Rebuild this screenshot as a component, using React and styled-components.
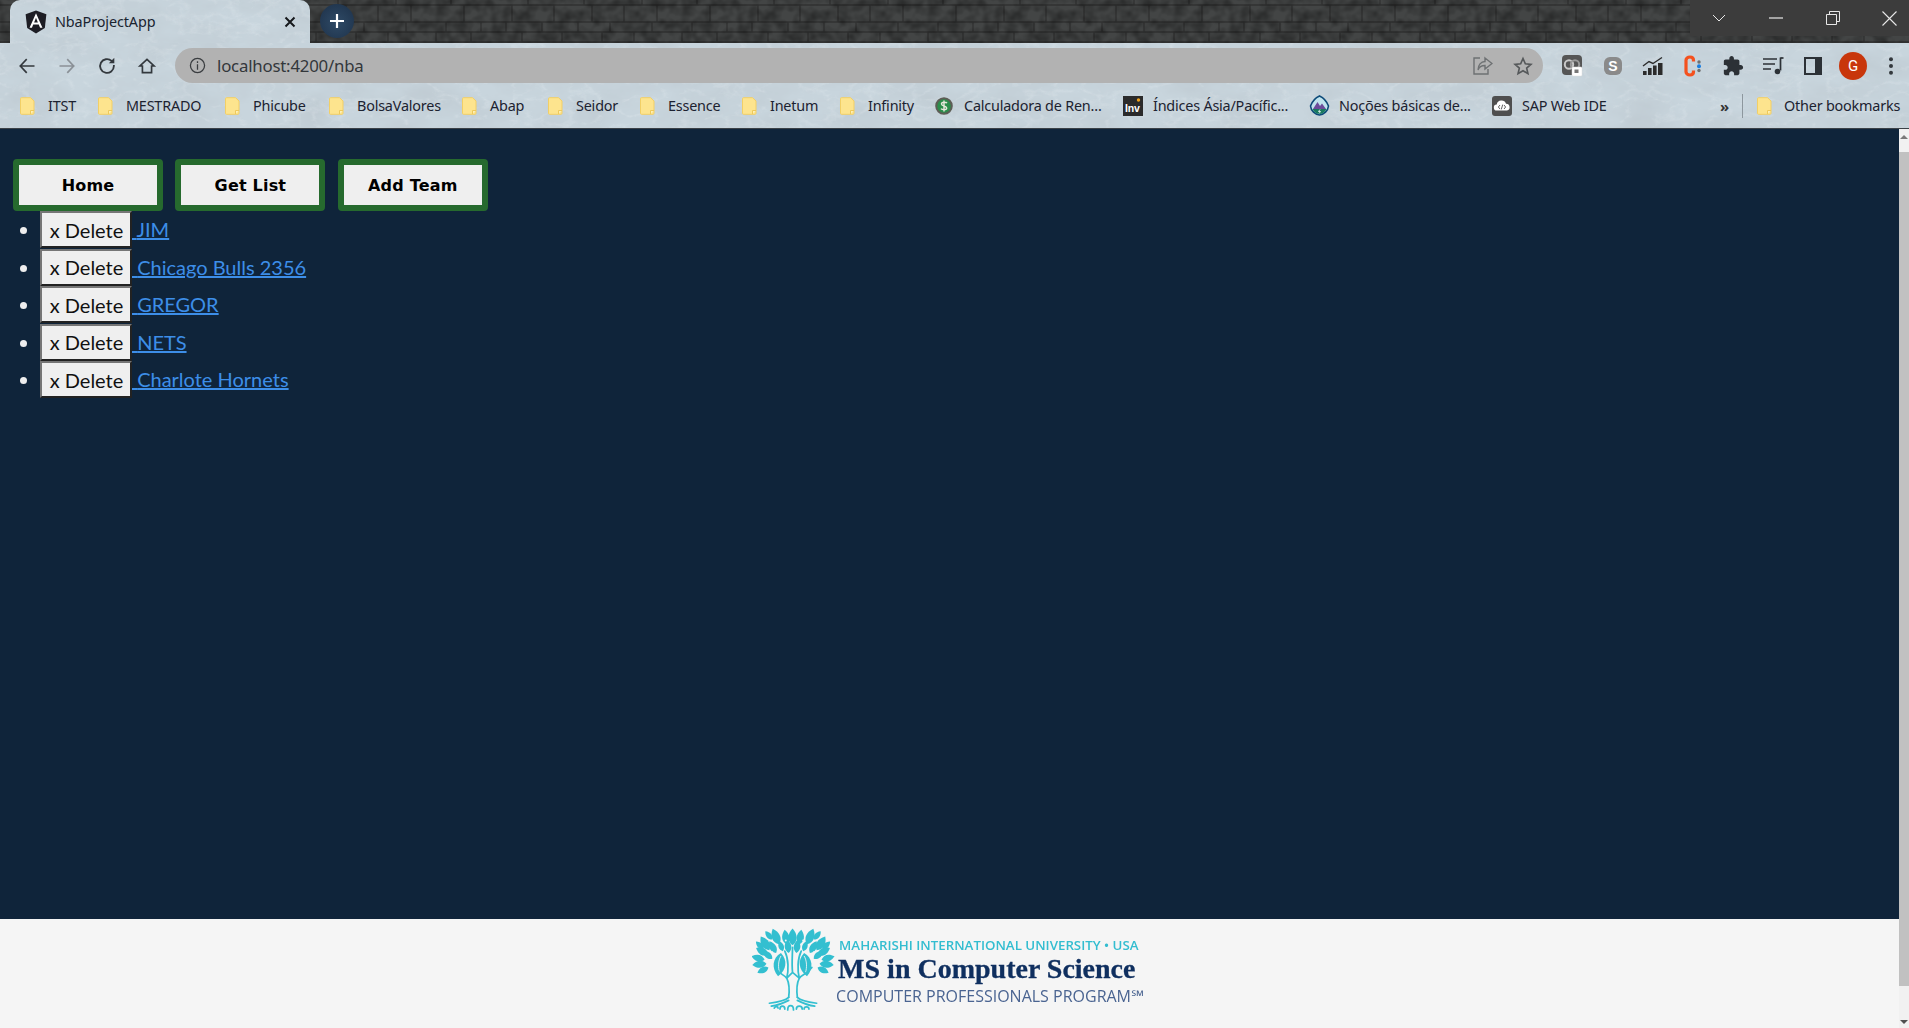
import React from "react";
import styled, { createGlobalStyle } from "styled-components";

const svgUrl = (s) => `url("data:image/svg+xml,${encodeURIComponent(s)}")`;

const marble = svgUrl(`<svg xmlns='http://www.w3.org/2000/svg' width='1909' height='130'>
<filter id='a' x='0' y='0' width='100%' height='100%'><feTurbulence type='fractalNoise' baseFrequency='0.018 0.035' numOctaves='5' seed='7'/>
<feColorMatrix values='0 0 0 0 0.52  0 0 0 0 0.59  0 0 0 0 0.64  1 1 0 0 -0.75'/></filter>
<filter id='b' x='0' y='0' width='100%' height='100%'><feTurbulence type='turbulence' baseFrequency='0.035 0.06' numOctaves='4' seed='11'/>
<feColorMatrix values='0 0 0 0 0.92  0 0 0 0 0.95  0 0 0 0 0.97  0 -2.2 0 0 0.55'/></filter>
<rect width='100%' height='100%' fill='#c8d5dd'/><rect width='100%' height='100%' filter='url(#a)'/><rect width='100%' height='100%' filter='url(#b)' opacity='.35'/></svg>`);

const stones = svgUrl(`<svg xmlns='http://www.w3.org/2000/svg' width='246' height='43'>
<filter id='n' x='0' y='0' width='100%' height='100%'><feTurbulence type='fractalNoise' baseFrequency='0.09' numOctaves='2' seed='3' stitchTiles='stitch'/>
<feColorMatrix values='0 0 0 0 0  0 0 0 0 0  0 0 0 0 0  0 .7 0 0 -0.22'/></filter>
<rect width='246' height='43' fill='#434545'/>
<g fill='none' stroke='#303131' stroke-width='1.3'>
<path d='M0 5H246M0 22H246M0 32H246M0 42H246'/>
<path d='M36 0V5M92 0V5M150 0V5M205 0V5M20 5V22M62 5V22M100 5V22M132 5V22M165 5V22M218 5V22M14 22V32M50 22V32M86 22V32M118 22V32M160 22V32M200 22V32M235 22V32M30 32V42M70 32V42M110 32V42M142 32V42M190 32V42M225 32V42'/></g>
<rect width='246' height='43' filter='url(#n)'/></svg>`);

const Global = createGlobalStyle`
  html, body { margin: 0; padding: 0; height: 100%; overflow: hidden; }
  body { font-family: "Lato", "Noto Sans", sans-serif; background: #0f243a; }
`;

const Shell = styled.div`
  height: 1028px;
  display: flex;
  flex-direction: column;
  overflow: hidden;
`;

const Chrome = styled.header`
  flex: none;
  height: 129px;
  display: flex;
  flex-direction: column;
  background: ${marble};
  border-bottom: 1px solid #3b4147;
  box-sizing: border-box;
  font-family: "Noto Sans", "Open Sans", sans-serif;
`;

const TabStrip = styled.div`
  height: 43px;
  flex: none;
  display: flex;
  background: ${stones};
  position: relative;
`;

const Tab = styled.div`
  margin-left: 10px;
  width: 300px;
  height: 43px;
  box-sizing: border-box;
  padding: 0 14px 0 15px;
  display: flex;
  align-items: center;
  gap: 8px;
  background: ${marble};
  border-radius: 10px 10px 0 0;
  font-size: 14.4px;
  color: #1a2430;
`;

const TabTitle = styled.span`
  flex: 1;
  letter-spacing: -0.1px;
`;

const NewTab = styled.div`
  margin: 4px 0 0 10px;
  width: 34px;
  height: 34px;
  border-radius: 50%;
  background: radial-gradient(circle at 50% 55%, #2f4a66, #1c3048);
  display: flex;
  align-items: center;
  justify-content: center;
`;

const WindowControls = styled.div`
  position: absolute;
  left: 1690px;
  top: 0;
  width: 219px;
  height: 36px;
  background: #3c3c3c;
  display: flex;
  overflow: hidden;
`;

const WinButton = styled.div`
  flex: none;
  width: 57px;
  display: flex;
  align-items: center;
  justify-content: center;
  color: #e8e8e8;
`;

const Toolbar = styled.div`
  height: 41px;
  flex: none;
  padding: 2px 0 0 7px;
  display: flex;
  align-items: center;
`;

const IconSlot = styled.div`
  flex: none;
  width: ${(p) => p.$w || 40}px;
  height: 36px;
  display: flex;
  align-items: center;
  justify-content: center;
  color: ${(p) => p.$color || "#33383d"};
`;

const UrlBar = styled.div`
  flex: none;
  margin: 0 10px 0 8px;
  width: 1368px;
  height: 35px;
  box-sizing: border-box;
  padding: 0 0 0 14px;
  display: flex;
  align-items: center;
  background: #b2b2b2;
  border-radius: 18px;
  color: #3a3d40;
`;

const UrlText = styled.span`
  flex: 1;
  margin-left: 11px;
  font-size: 16.8px;
  letter-spacing: -0.2px;
  color: #33373b;
`;

const Avatar = styled.div`
  width: 28px;
  height: 28px;
  border-radius: 50%;
  background: #c8360b;
  color: #fff;
  font-family: "Roboto", sans-serif;
  font-size: 15px;
  display: flex;
  align-items: center;
  justify-content: center;
`;

const Bookmarks = styled.div`
  height: 39px;
  flex: none;
  padding: 0 0 0 20px;
  display: flex;
  align-items: center;
`;

const Mark = styled.div`
  flex: none;
  width: ${(p) => p.$w}px;
  display: flex;
  align-items: center;
  gap: ${(p) => p.$gap ?? 13}px;
  font-size: 14.4px;
  letter-spacing: -0.2px;
  color: #1c2230;
  white-space: nowrap;
`;

const MarkSep = styled.div`
  flex: none;
  width: 1px;
  height: 24px;
  background: #8d979e;
  margin: 0 14px 0 0;
`;

const Chevrons = styled.div`
  flex: none;
  width: 22px;
  font-size: 15px;
  font-weight: 700;
  color: #333;
`;

const Body = styled.div`
  flex: 1;
  min-height: 0;
  display: flex;
`;

const Page = styled.div`
  flex: 1;
  display: flex;
  flex-direction: column;
  min-width: 0;
`;

const Main = styled.main`
  flex: 1;
  background: #0f243a;
  padding-top: 30px;
`;

const Nav = styled.nav`
  display: flex;
  gap: 12.4px;
  padding-left: 13px;
`;

const NavButton = styled.button`
  width: 150px;
  height: 52px;
  box-sizing: border-box;
  border: 6px solid #266a2e;
  border-radius: 4px;
  background: #efefef;
  color: #000;
  font-family: "DejaVu Sans", sans-serif;
  font-weight: 700;
  font-size: 16px;
  letter-spacing: 0.2px;
  padding: 0;
`;

const Teams = styled.ul`
  margin: 0;
  padding: 0 0 0 40px;
  color: #eee;
  font-size: 20px;
  line-height: 37.5px;
`;

const Team = styled.li`
  height: 37.5px;
`;

const DeleteButton = styled.button`
  height: 37px;
  width: 92px;
  box-sizing: border-box;
  padding: 0 0 0 1px;
  vertical-align: top;
  background: #efefef;
  color: #111;
  font-family: "Lato", sans-serif;
  font-size: 20px;
  border-style: solid;
  border-width: 2px;
  border-color: #767676 #222 #222 #767676;
`;

const TeamLink = styled.a`
  color: #3d8ee8;
  text-decoration: underline;
  vertical-align: top;
`;

const Footer = styled.footer`
  flex: none;
  height: 109px;
  background: #f5f5f5;
  display: flex;
  justify-content: center;
  align-items: flex-start;
  padding-right: 3px;
  filter: blur(0.35px);
`;

const Logo = styled.div`
  display: flex;
  align-items: flex-start;
  margin-top: 7px;
`;

const LogoText = styled.div`
  display: flex;
  flex-direction: column;
  margin-left: 1px;
`;

const LogoTop = styled.div`
  margin: 10px 0 0 3px;
  height: 18px;
  font: 600 13.3px/18px "Open Sans", sans-serif;
  color: #33bdd0;
  white-space: nowrap;
`;

const LogoTitle = styled.div`
  margin-left: 2px;
  height: 30px;
  font: 700 28px/30px "Liberation Serif", serif;
  -webkit-text-stroke: 0.3px #0f2f5f;
  color: #0f2f5f;
  white-space: nowrap;
`;

const LogoSub = styled.div`
  margin-top: 1px;
  font: 400 16px/22px "Open Sans", sans-serif;
  color: #4a6491;
  white-space: nowrap;
`;

const Scrollbar = styled.aside`
  flex: none;
  width: 10px;
  background: #f1f1f1;
  display: flex;
  flex-direction: column;
  align-items: center;
`;

const ScrollThumb = styled.div`
  width: 100%;
  height: 834px;
  margin: 23px 0 auto;
  background: #c1c1c1;
`;

const Arrow = styled.div`
  flex: none;
  width: 0;
  height: 0;
  border-left: 4px solid transparent;
  border-right: 4px solid transparent;
  ${(p) => p.$up ? "border-bottom: 4px solid #7a7a7a; margin-top: 6px; margin-bottom: -10px;" : "border-top: 4px solid #505050; margin-bottom: 4px;"}
`;

const Stroke = ({ size = 20, children, sw = 2, fill = "none", vb = 24 }) => (
  <svg width={size} height={size} viewBox={`0 0 ${vb} ${vb}`} fill={fill} stroke={fill === "none" ? "currentColor" : "none"} strokeWidth={sw} strokeLinecap="square">
    {children}
  </svg>
);

const Folder = () => (
  <svg width="15" height="18" viewBox="0 0 15 18" style={{ flex: "none" }}>
    <path d="M1.5 .7H10.5L14 4V16.3a1 1 0 0 1-1 1H1.5a1 1 0 0 1-1-1V1.7a1 1 0 0 1 1-1Z" fill="#fde48e" stroke="#f2cf66" />
    <path d="M10.5 17V13.5H14" fill="#fdf0b8" stroke="#efc95a" />
  </svg>
);

const AngularIcon = () => (
  <svg width="22" height="24" viewBox="14 6 222 238" style={{ flex: "none" }}>
    <path fill="#1d1d24" d="M125 10 20 48l16 138 89 54 89-54 16-138z" />
    <path fill="#fff" d="M125 36 60 182h24l13-33h56l13 33h24zm19 93h-38l19-46z" />
  </svg>
);

const MoneyIcon = () => (
  <svg width="18" height="18" viewBox="0 0 18 18" style={{ flex: "none" }}>
    <circle cx="9" cy="9" r="7.8" fill="#2c8d4b" stroke="#5d5d55" strokeWidth="2" />
    <path d="M12 6.2C11 4.8 6.5 4.8 6.5 7c0 2.4 5.2 1.6 5.2 4 0 2.2-4.6 2-5.7.6M9 3.5v11" fill="none" stroke="#e8e8dc" strokeWidth="1.4" />
  </svg>
);

const InvIcon = () => (
  <svg width="20" height="20" viewBox="0 0 20 20" style={{ flex: "none" }}>
    <rect width="20" height="20" fill="#2b2b2b" />
    <text x="2" y="16" fill="#fff" fontSize="10.5" fontWeight="700" fontFamily="Liberation Sans, sans-serif">Inv</text>
    <circle cx="15.5" cy="4" r="1.7" fill="#f2a31c" />
  </svg>
);

const TrailIcon = () => (
  <svg width="21" height="21" viewBox="0 0 21 21" style={{ flex: "none" }}>
    <path d="M10.5 1 C15 3 18 7 19.5 11 C19 16 15 19.5 10.5 20 C6 19.5 2 16 1.5 11 C3 7 6 3 10.5 1Z" fill="#bfe3ee" stroke="#0d4a78" strokeWidth="1.6" />
    <path d="M4 14 8.5 7 11 11 13 8.5 17 14Z" fill="#6b4b9a" />
    <path d="M3.5 14H17.5C16 17.5 13 19 10.5 19S5 17.5 3.5 14Z" fill="#18795f" />
    <path d="M11 14.5 9.5 16.5H11.5L10 18.5" fill="none" stroke="#fff" strokeWidth=".8" />
  </svg>
);

const SapIcon = () => (
  <svg width="20" height="20" viewBox="0 0 20 20" style={{ flex: "none" }}>
    <rect width="20" height="20" rx="3" fill="#4f4f4f" />
    <path d="M5 14.5a3 3 0 0 1-.3-6 4.8 4.8 0 0 1 9.3-.7 3.4 3.4 0 0 1 1 6.7Z" fill="#fff" />
    <path d="M8 9 6.4 11 8 13M12 9l1.6 2L12 13M10.7 8.6 9.3 13.4" fill="none" stroke="#4f4f4f" strokeWidth=".9" />
  </svg>
);

const ExtMeet = () => (
  <svg width="22" height="22" viewBox="0 0 22 22">
    <rect width="20" height="20" rx="4" fill="#555" />
    <circle cx="7" cy="9.5" r="4.2" fill="none" stroke="#c9c9c9" strokeWidth="2" />
    <circle cx="13" cy="9.5" r="4.2" fill="none" stroke="#9a9a9a" strokeWidth="2" />
    <rect x="10" y="12" width="10" height="9" rx="1" fill="#fff" stroke="#ddd" strokeWidth=".5" />
    <rect x="12.5" y="14.5" width="4" height="3.5" fill="#777" />
  </svg>
);

const ExtSkype = () => (
  <svg width="20" height="20" viewBox="0 0 20 20">
    <rect width="18" height="18" x="1" y="1" rx="6" fill="#8a8a8a" />
    <text x="10" y="15" textAnchor="middle" fill="#fff" fontSize="14" fontWeight="700" fontFamily="Liberation Sans, sans-serif">S</text>
  </svg>
);

const ExtChart = () => (
  <svg width="22" height="20" viewBox="0 0 22 20">
    <path d="M1 10 7 5.5 11 7.5 20 1.5" fill="none" stroke="#2b2b2b" strokeWidth="1.4" />
    <g fill="#2b2b2b">
      <rect x="1" y="15" width="3.6" height="4" />
      <rect x="6" y="12" width="3.6" height="7" />
      <rect x="11" y="9.5" width="3.6" height="9.5" />
      <rect x="16" y="7" width="4.5" height="12" />
    </g>
  </svg>
);

const ExtC = () => (
  <svg width="20" height="24" viewBox="0 0 20 24">
    <path d="M10.5 7.5V6.2C10.5 4.4 9.3 3 7 3S3 4.4 3 6.2V17.8C3 19.6 4.7 21 7 21s3.5-1.4 3.5-3.2v-1.3" fill="none" stroke="#f4511e" strokeWidth="3.2" />
    <circle cx="16" cy="8" r="1.7" fill="#707070" />
    <circle cx="16" cy="12.2" r="2" fill="#1a7ee0" />
    <circle cx="16" cy="16.5" r="1.7" fill="#707070" />
  </svg>
);

const Puzzle = () => (
  <svg width="22" height="22" viewBox="0 0 24 24" fill="#2c3136">
    <path d="M20.5 11H19V7c0-1.1-.9-2-2-2h-4V3.5C13 2.12 11.88 1 10.5 1S8 2.12 8 3.5V5H4c-1.1 0-1.99.9-1.99 2v3.8H3.5c1.49 0 2.7 1.21 2.7 2.7s-1.21 2.7-2.7 2.7H2V20c0 1.1.9 2 2 2h3.8v-1.5c0-1.49 1.21-2.7 2.7-2.7 1.49 0 2.7 1.21 2.7 2.7V22H17c1.1 0 2-.9 2-2v-4h1.5c1.38 0 2.5-1.12 2.5-2.5S21.88 11 20.5 11z" />
  </svg>
);

const Queue = () => (
  <svg width="22" height="20" viewBox="0 0 22 20" fill="none" stroke="#2c3136" strokeWidth="1.7">
    <path d="M1 3H15M1 8H13M1 13H9" />
    <path d="M18.5 1.5V14.5" />
    <path d="M18.5 2H21.5" />
    <circle cx="15.5" cy="15.5" r="2.8" fill="#2c3136" stroke="none" />
  </svg>
);

const SidePanel = () => (
  <svg width="18" height="18" viewBox="0 0 18 18">
    <path fillRule="evenodd" d="M0 0H18V18H0ZM2 2V16H11V2Z" fill="#2c3136" />
  </svg>
);

const Dots = () => (
  <svg width="4" height="18" viewBox="0 0 4 18" fill="#33383d">
    <circle cx="2" cy="2.2" r="2" />
    <circle cx="2" cy="9" r="2" />
    <circle cx="2" cy="15.8" r="2" />
  </svg>
);

const leaves = [
  [48, 22, 0, 1.25], [42, 21, -8, 1.1], [55, 21, 8, 1.1],
  [34, 21, -22, 1.25], [63, 21, 22, 1.25], [27, 16, 320, .8], [70, 16, 40, .8],
  [24, 27, -32, 1.2], [73, 27, 32, 1.2], [18, 26, -45, .8], [79, 26, 45, .8],
  [23, 32, -60, 1.05], [74, 32, 60, 1.05], [19, 37, -75, 1.0], [78, 37, 75, 1.0],
  [21, 41, -95, 1.05], [76, 41, 95, 1.05], [23, 45, -115, .9], [74, 45, 115, .9],
  [27, 36, -50, .9], [70, 36, 50, .9], [38, 28, -20, .8], [59, 28, 20, .8],
  [31, 30, -30, 1], [66, 30, 30, 1], [44, 30, -6, 1], [52, 30, 6, 1],
];

const Tree = () => (
  <svg width="83" height="85" viewBox="6 2 86 88" style={{ flex: "none" }}>
    <g fill="#33bfd0">
      {leaves.map(([x, y, r, s], i) => (
        <path key={i} transform={`translate(${x} ${y}) rotate(${r}) scale(${s})`} d="M0 0C4.6-3.5 4.6-9 0-14C-4.6-9-4.6-3.5 0 0Z" />
      ))}
      <path d="M36 30C27 35 26 46 33 54C42 48 43 37 36 30Z" />
      <path d="M60 30C69 35 70 46 63 54C54 48 53 37 60 30Z" />
    </g>
    <g fill="none" stroke="#f5f5f5" strokeWidth=".9">
      <path d="M36 33C33 38 33 45 34.5 50M60 33C63 38 63 45 61.5 50" />
    </g>
    <g fill="none" stroke="#33bfd0" strokeWidth="1.8" strokeLinecap="round">
      <path d="M44 76C45 68 45 62 42 56C39 52 34 52 30 45M53 76C52 68 52 62 55 56C58 52 63 52 68 45" />
      <path d="M42 56C44 48 44 36 40 28M55 56C53 48 53 36 57 28M48 50C47 40 48 32 48 24M42 56 48 50 55 56" />
      <path d="M44 76C40 80 32 81 24 82M53 76C57 80 65 81 73 82M26 85C34 84 38 82 44 79M71 85C63 84 59 82 53 79" />
      <path d="M35 88C35 84 40 84 40 88M43 89C43 83 49 83 49 89M52 88C52 84 58 84 58 88M60 88C60 85 65 85 65 88M29 87C30 85 33 85 33 87" />
    </g>
    <g fill="#f5f5f5">
      <circle cx="27" cy="29" r="1" /><circle cx="70" cy="29" r="1" /><circle cx="41" cy="17" r="1" /><circle cx="59" cy="17" r="1" />
    </g>
  </svg>
);

const marks = [
  { label: "ITST", w: 78, gap: 13 },
  { label: "MESTRADO", w: 127, gap: 13 },
  { label: "Phicube", w: 104, gap: 13 },
  { label: "BolsaValores", w: 133, gap: 13 },
  { label: "Abap", w: 86, gap: 13 },
  { label: "Seidor", w: 92, gap: 13 },
  { label: "Essence", w: 102, gap: 13 },
  { label: "Inetum", w: 98, gap: 13 },
  { label: "Infinity", w: 95, gap: 13 },
  { label: "Calculadora de Ren...", icon: <MoneyIcon />, w: 188, gap: 11 },
  { label: "Índices Ásia/Pacífic...", icon: <InvIcon />, w: 186, gap: 10 },
  { label: "Noções básicas de...", icon: <TrailIcon />, w: 183, gap: 9 },
  { label: "SAP Web IDE", icon: <SapIcon />, w: 228, gap: 10 },
];

const teams = ["JIM", "Chicago Bulls 2356", "GREGOR", "NETS", "Charlote Hornets"];

export default function App() {
  return (
    <Shell>
      <Global />
      <Chrome>
        <TabStrip>
          <Tab>
            <AngularIcon />
            <TabTitle>NbaProjectApp</TabTitle>
            <svg width="12" height="12" viewBox="0 0 12 12" stroke="#16191c" strokeWidth="2">
              <path d="M1.5 1.5 10.5 10.5M10.5 1.5 1.5 10.5" />
            </svg>
          </Tab>
          <NewTab>
            <svg width="16" height="16" viewBox="0 0 16 16" stroke="#fff" strokeWidth="2.2">
              <path d="M8 1V15M1 8H15" />
            </svg>
          </NewTab>
          <WindowControls>
            <WinButton>
              <svg width="14" height="8" viewBox="0 0 14 8" fill="none" stroke="currentColor"><path d="M1 1 7 7 13 1" /></svg>
            </WinButton>
            <WinButton>
              <svg width="14" height="2" viewBox="0 0 14 2" stroke="currentColor" strokeWidth="1.2"><path d="M0 1H14" /></svg>
            </WinButton>
            <WinButton>
              <svg width="14" height="14" viewBox="0 0 14 14" fill="none" stroke="currentColor"><path d="M.5 3.5H10.5V13.5H.5ZM3.5 3.5V.5H13.5V10.5H10.5" /></svg>
            </WinButton>
            <WinButton>
              <svg width="15" height="15" viewBox="0 0 15 15" stroke="currentColor" strokeWidth="1.1"><path d="M.5.5 14.5 14.5M14.5.5.5 14.5" /></svg>
            </WinButton>
          </WindowControls>
        </TabStrip>
        <Toolbar>
          <IconSlot>
            <Stroke><path d="M20 12H4M11 4.5 4 12l7 7.5" /></Stroke>
          </IconSlot>
          <IconSlot $color="#8a9096">
            <Stroke><path d="M4 12H20M13 4.5 20 12l-7 7.5" /></Stroke>
          </IconSlot>
          <IconSlot>
            <Stroke size={22}><path d="M19.5 12A7.5 7.5 0 1 1 17 6.4" /><path d="M20 3V9H14" fill="currentColor" stroke="none" /></Stroke>
          </IconSlot>
          <IconSlot>
            <Stroke sw={2}><path d="M12 4 3.5 12H6.5V20H17.5V12H20.5Z" strokeLinejoin="miter" /></Stroke>
          </IconSlot>
          <UrlBar>
            <Stroke size={17} sw={1.8}>
              <circle cx="12" cy="12" r="10" />
              <path d="M12 11V17M12 7V7.6" />
            </Stroke>
            <UrlText>localhost:4200/nba</UrlText>
            <IconSlot $color="#6e7173">
              <svg width="20" height="20" viewBox="0 0 20 20" fill="none" stroke="currentColor" strokeWidth="1.4">
                <path d="M7 2H1V18H15V13" />
                <path d="M12 2 19 7.5 12 13V9.5C8 9.5 6 11 5 14C5 9 8 5.5 12 5.5Z" />
              </svg>
            </IconSlot>
            <IconSlot $color="#55585a">
              <svg width="20" height="20" viewBox="0 0 24 24" fill="none" stroke="currentColor" strokeWidth="2">
                <path d="M12 3 14.8 9.3 21.5 10 16.4 14.5 17.9 21.2 12 17.7 6.1 21.2 7.6 14.5 2.5 10 9.2 9.3Z" />
              </svg>
            </IconSlot>
          </UrlBar>
          <IconSlot><ExtMeet /></IconSlot>
          <IconSlot><ExtSkype /></IconSlot>
          <IconSlot><ExtChart /></IconSlot>
          <IconSlot><ExtC /></IconSlot>
          <IconSlot><Puzzle /></IconSlot>
          <IconSlot><Queue /></IconSlot>
          <IconSlot><SidePanel /></IconSlot>
          <IconSlot><Avatar>G</Avatar></IconSlot>
          <IconSlot $w={36}><Dots /></IconSlot>
        </Toolbar>
        <Bookmarks>
          {marks.map((m) => (
            <Mark key={m.label} $w={m.w} $gap={m.gap}>
              {m.icon || <Folder />}
              {m.label}
            </Mark>
          ))}
          <Chevrons>»</Chevrons>
          <MarkSep />
          <Mark $w={150} $gap={12}>
            <Folder />
            Other bookmarks
          </Mark>
        </Bookmarks>
      </Chrome>
      <Body>
        <Page>
          <Main>
            <Nav>
              <NavButton>Home</NavButton>
              <NavButton>Get List</NavButton>
              <NavButton>Add Team</NavButton>
            </Nav>
            <Teams>
              {teams.map((t) => (
                <Team key={t}>
                  <DeleteButton>x Delete</DeleteButton>
                  <TeamLink href="#">{"\u00a0"}{t}</TeamLink>
                </Team>
              ))}
            </Teams>
          </Main>
          <Footer>
            <Logo>
              <Tree />
              <LogoText>
                <LogoTop>MAHARISHI INTERNATIONAL UNIVERSITY • USA</LogoTop>
                <LogoTitle>MS in Computer Science</LogoTitle>
                <LogoSub>COMPUTER PROFESSIONALS PROGRAM℠</LogoSub>
              </LogoText>
            </Logo>
          </Footer>
        </Page>
        <Scrollbar>
          <Arrow $up />
          <ScrollThumb />
          <Arrow />
        </Scrollbar>
      </Body>
    </Shell>
  );
}
